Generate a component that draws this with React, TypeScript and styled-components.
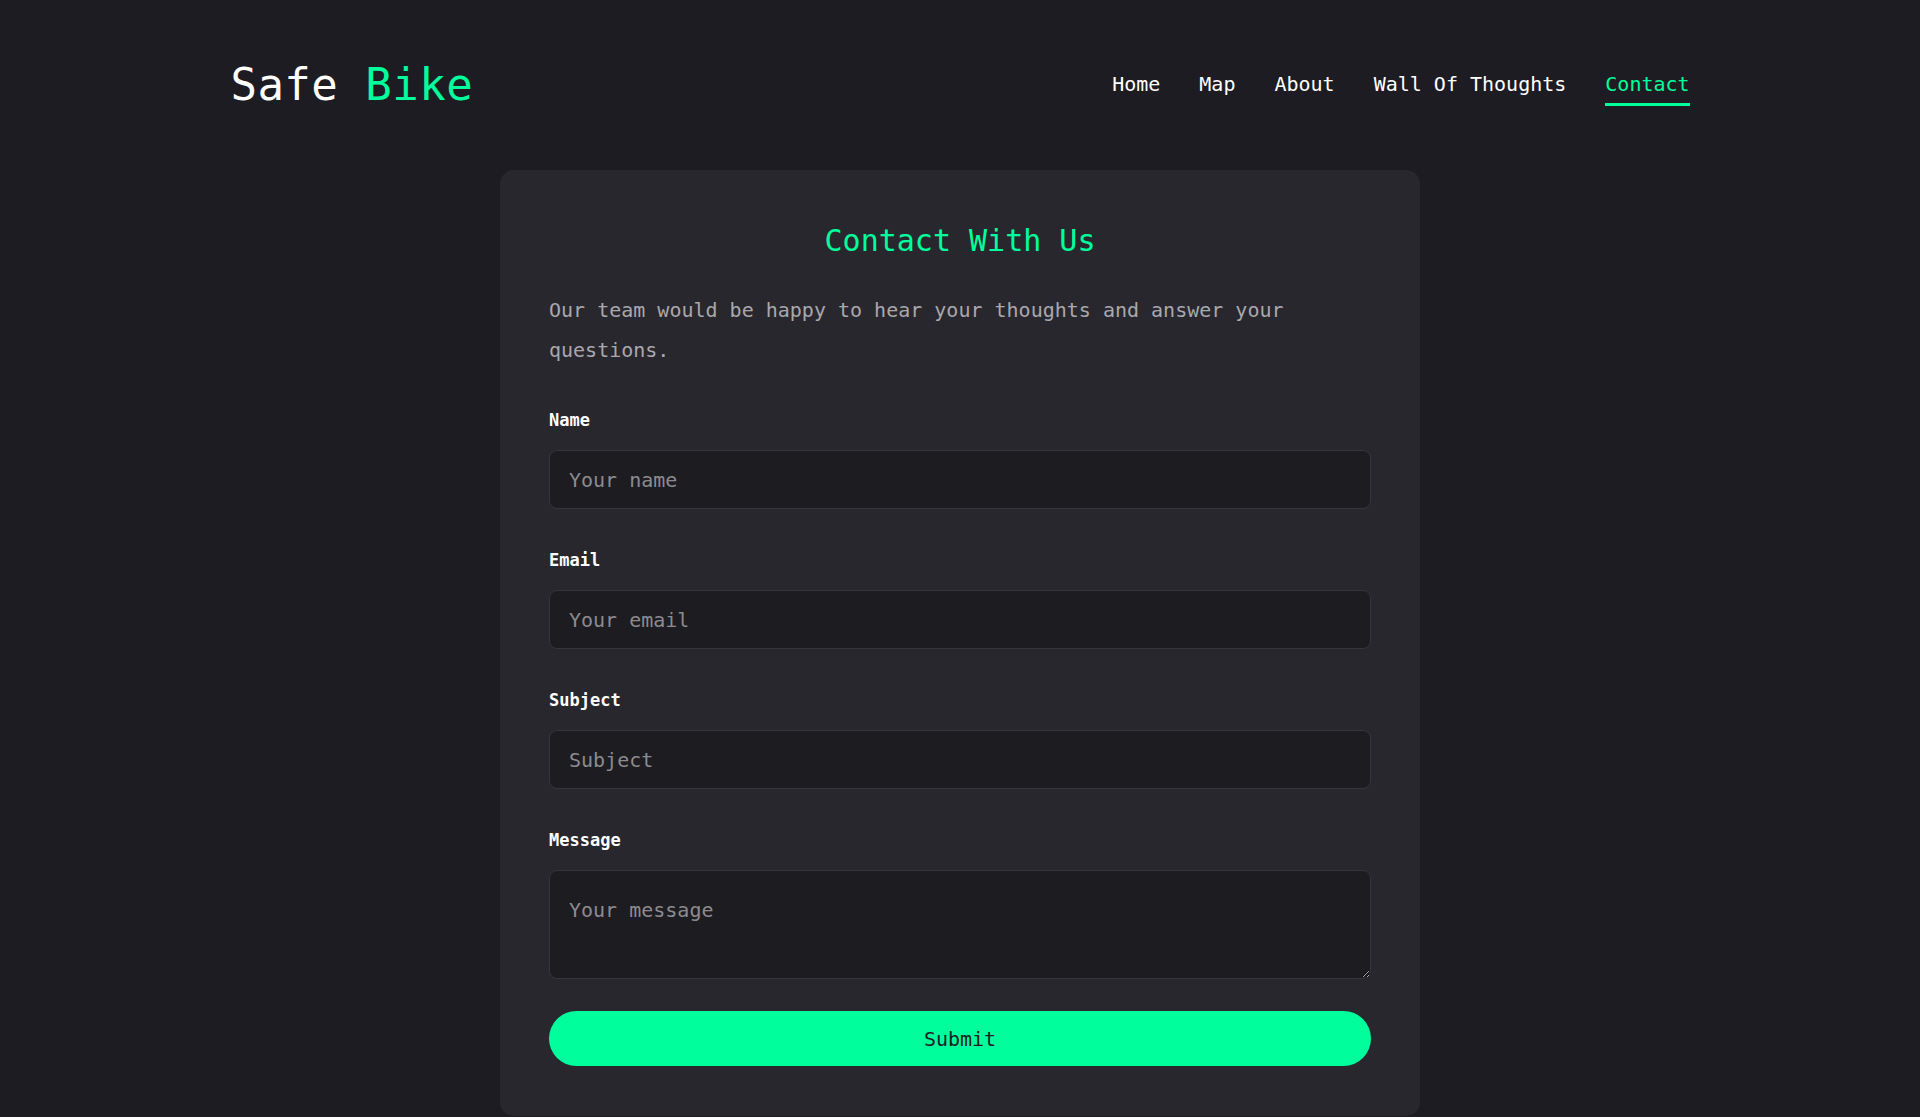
import React from "react";
import styled, { createGlobalStyle } from "styled-components";

const GREEN = "#00ff9c";

const GlobalStyle = createGlobalStyle`
  html, body {
    margin: 0;
    padding: 0;
    background: #1d1c22;
  }
  body {
    font-family: "DejaVu Sans Mono", "Liberation Mono", monospace;
    color: #ffffff;
  }
  * { box-sizing: border-box; }
`;

const Page = styled.div`
  min-height: 1117px;
  background: #1d1c22;
`;

const Header = styled.header`
  height: 168px;
  padding: 0 12%;
  display: flex;
  align-items: center;
  justify-content: space-between;
`;

const Logo = styled.div`
  font-size: 44px;
  font-weight: 500;
  letter-spacing: 0.5px;
  line-height: 1;
  color: #ffffff;
  padding-top: 2px;
`;

const LogoAccent = styled.span`
  color: ${GREEN};
`;

const Nav = styled.nav`
  display: flex;
  align-items: center;
  gap: 39px;
`;

const NavLink = styled.a<{ $active?: boolean }>`
  position: relative;
  font-size: 20px;
  font-weight: 500;
  line-height: 24px;
  color: ${(p) => (p.$active ? GREEN : "#ffffff")};
  text-decoration: none;
  cursor: pointer;
  &::after {
    content: "";
    display: ${(p) => (p.$active ? "block" : "none")};
    position: absolute;
    left: 0;
    right: 0;
    bottom: -10px;
    height: 3px;
    background: ${GREEN};
  }
`;

const Main = styled.main`
  display: flex;
  justify-content: center;
  padding-top: 2px;
`;

const Card = styled.section`
  width: 920px;
  background: #28272d;
  border-radius: 14px;
  padding: 48px 49px 50px;
`;

const Title = styled.h2`
  margin: 0;
  text-align: center;
  color: ${GREEN};
  font-size: 30px;
  font-weight: 400;
  line-height: 45px;
`;

const Intro = styled.p`
  margin: 27px 0 0;
  color: #a9a8ad;
  font-size: 20px;
  line-height: 40px;
`;

const Form = styled.form`
  margin-top: 40px;
  display: flex;
  flex-direction: column;
  gap: 41px;
`;

const Field = styled.div`
  display: flex;
  flex-direction: column;
  gap: 20px;
`;

const Label = styled.label`
  font-size: 17px;
  font-weight: 700;
  line-height: 20px;
  color: #ffffff;
`;

const inputStyles = `
  width: 100%;
  background: #1d1c21;
  border: 1px solid #36353b;
  border-radius: 8px;
  color: #ffffff;
  font-family: "DejaVu Sans Mono", "Liberation Mono", monospace;
  font-size: 20px;
  padding: 0 19px;
  outline: none;
  &::placeholder {
    color: #8c8b90;
  }
`;

const Input = styled.input`
  ${inputStyles}
  height: 59px;
`;

const TextArea = styled.textarea`
  ${inputStyles}
  height: 109px;
  padding-top: 25px;
  line-height: 28px;
  display: block;
`;

const SubmitButton = styled.button`
  margin-top: -9px;
  height: 55px;
  width: 100%;
  border: none;
  border-radius: 28px;
  background: ${GREEN};
  color: #1d1c22;
  font-family: "DejaVu Sans Mono", "Liberation Mono", monospace;
  font-size: 20px;
  font-weight: 500;
  cursor: pointer;
`;

const navItems = ["Home", "Map", "About", "Wall Of Thoughts", "Contact"];

export default function App() {
  return (
    <Page>
      <GlobalStyle />
      <Header>
        <Logo>
          Safe <LogoAccent>Bike</LogoAccent>
        </Logo>
        <Nav>
          {navItems.map((item) => (
            <NavLink key={item} $active={item === "Contact"}>
              {item}
            </NavLink>
          ))}
        </Nav>
      </Header>
      <Main>
        <Card>
          <Title>Contact With Us</Title>
          <Intro>
            Our team would be happy to hear your thoughts and answer your
            questions.
          </Intro>
          <Form onSubmit={(e) => e.preventDefault()}>
            <Field>
              <Label htmlFor="name">Name</Label>
              <Input id="name" placeholder="Your name" />
            </Field>
            <Field>
              <Label htmlFor="email">Email</Label>
              <Input id="email" placeholder="Your email" />
            </Field>
            <Field>
              <Label htmlFor="subject">Subject</Label>
              <Input id="subject" placeholder="Subject" />
            </Field>
            <Field>
              <Label htmlFor="message">Message</Label>
              <TextArea id="message" placeholder="Your message" />
            </Field>
            <SubmitButton type="submit">Submit</SubmitButton>
          </Form>
        </Card>
      </Main>
    </Page>
  );
}
